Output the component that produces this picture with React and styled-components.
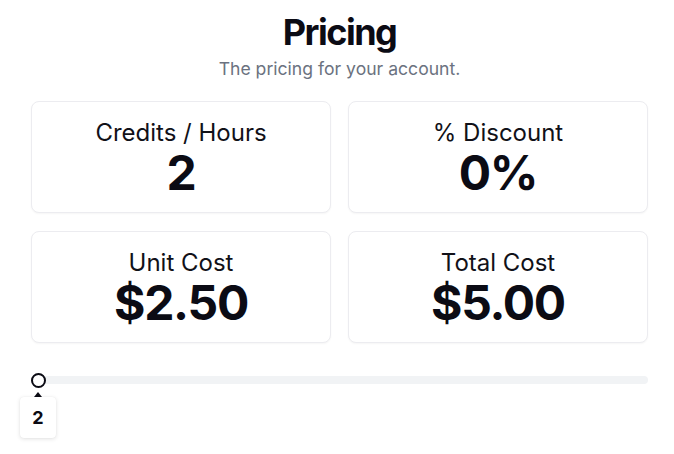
import React from "react";
import styled, { createGlobalStyle } from "styled-components";

const GlobalStyle = createGlobalStyle`
  html, body { margin: 0; padding: 0; background: #ffffff; }
  body { font-family: Inter, "Noto Sans", sans-serif; color: #0a0a12; }
  * { box-sizing: border-box; }
`;

const Page = styled.div`
  padding: 12px 26px 0 31px;
  display: flex;
  flex-direction: column;
`;

const Header = styled.header`
  display: flex;
  flex-direction: column;
  align-items: center;
  gap: 3px;
`;

const Title = styled.h1`
  margin: 0;
  font-size: 36px;
  line-height: 40px;
  font-weight: 700;
  letter-spacing: -1.5px;
  color: #0b0b14;
`;

const Subtitle = styled.p`
  margin: 0;
  font-size: 17.6px;
  line-height: 28px;
  color: #6b7280;
`;

const Grid = styled.div`
  margin-top: 18px;
  display: grid;
  grid-template-columns: 1fr 1fr;
  column-gap: 17px;
  row-gap: 18px;
`;

const Card = styled.div`
  border: 1px solid #ececf0;
  border-radius: 8px;
  box-shadow: 0 1px 2px rgba(0, 0, 0, 0.04);
  padding: 15px 16px 15px;
  display: flex;
  flex-direction: column;
  align-items: center;
  background: #fff;
`;

const Label = styled.div`
  font-size: 24px;
  line-height: 32px;
  font-weight: 400;
  color: #111118;
`;

const Value = styled.div`
  font-size: 48px;
  line-height: 48px;
  font-weight: 700;
  letter-spacing: -1.3px;
  color: #0b0b14;
`;

const SliderArea = styled.div`
  margin-top: 33px;
  position: relative;
  height: 80px;
`;

const Track = styled.div`
  position: relative;
  height: 8px;
  border-radius: 4px;
  background: #f1f3f5;
`;

const Thumb = styled.div`
  position: absolute;
  top: 50%;
  width: 15px;
  height: 15px;
  margin-top: -7.5px;
  border-radius: 50%;
  border: 2px solid #0b0b14;
  background: #ffffff;
`;

const Tip = styled.div`
  position: absolute;
  top: 21px;
  width: 36px;
  height: 41px;
  margin-left: -11px;
  border-radius: 4px;
  background: #ffffff;
  box-shadow: 0 1px 4px rgba(0, 0, 0, 0.12), 0 0 1px rgba(0, 0, 0, 0.08);
  display: flex;
  align-items: center;
  justify-content: center;
  font-size: 18px;
  font-weight: 700;
  color: #0b0b14;

  &::before {
    content: "";
    position: absolute;
    top: -5px;
    left: 50%;
    margin-left: -4px;
    border-left: 4px solid transparent;
    border-right: 4px solid transparent;
    border-bottom: 5px solid #0b0b14;
  }
`;

const stats = [
  { label: "Credits / Hours", value: "2" },
  { label: "% Discount", value: "0%" },
  { label: "Unit Cost", value: "$2.50" },
  { label: "Total Cost", value: "$5.00" },
];

export default function App() {
  const min = 2;
  const max = 100;
  const val = 2;
  const pct = ((val - min) / (max - min)) * 100;
  return (
    <>
      <GlobalStyle />
      <Page>
        <Header>
          <Title>Pricing</Title>
          <Subtitle>The pricing for your account.</Subtitle>
        </Header>
        <Grid>
          {stats.map((s) => (
            <Card key={s.label}>
              <Label>{s.label}</Label>
              <Value>{s.value}</Value>
            </Card>
          ))}
        </Grid>
        <SliderArea>
          <Track>
            <Thumb style={{ left: `${pct}%` }} />
            <Tip style={{ left: `${pct}%` }}>{val}</Tip>
          </Track>
        </SliderArea>
      </Page>
    </>
  );
}
